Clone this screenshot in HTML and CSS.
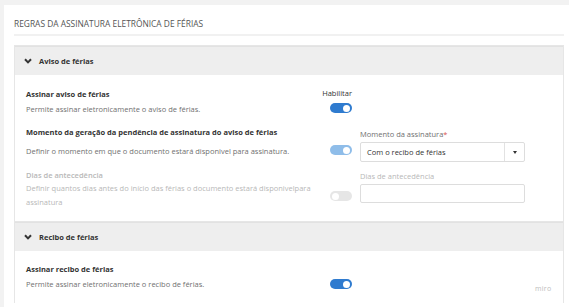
FILE: index.html
```html
<!DOCTYPE html>
<html lang="pt-BR">
  <head>
    <meta charset="UTF-8" />
    <meta name="viewport" content="width=device-width, initial-scale=1.0" />
    <title>Regras da assinatura eletrônica de férias</title>
    <link rel="stylesheet" href="styles.css">
  </head>
  <body>
    <div class="card">
      <h1 class="card-title">REGRAS DA ASSINATURA ELETRÔNICA DE FÉRIAS</h1>

      <!-- Aviso de férias -->
      <section class="panel">
        <div class="panel-header">
          <svg class="chevron" viewBox="0 0 8 6" width="8" height="6">
            <path d="M1 1.2 L4 4.4 L7 1.2" />
          </svg>
          Aviso de férias
        </div>
        <div class="panel-body">
          <div class="rule rule-first">
            <div class="rule-text">
              <div class="rule-title">Assinar aviso de férias</div>
              <div class="rule-desc desc-first">Permite assinar eletronicamente o aviso de férias.</div>
            </div>
            <div class="toggle-cell">
              <span class="toggle-label">Habilitar</span>
              <span class="toggle on"></span>
            </div>
            <div></div>
          </div>

          <div class="rule rule-moment">
            <div class="rule-text">
              <div class="rule-title">Momento da geração da pendência de assinatura do aviso de férias</div>
              <div class="rule-desc desc-moment">Definir o momento em que o documento estará disponivel para assinatura.</div>
            </div>
            <div class="toggle-cell toggle-moment">
              <span class="toggle on disabled"></span>
            </div>
            <div class="field">
              <label class="field-label">Momento da assinatura<span class="required">*</span></label>
              <div class="select">
                <span>Com o recibo de férias</span>
                <span class="select-arrow"></span>
              </div>
            </div>
          </div>

          <div class="rule rule-days muted">
            <div class="rule-text">
              <div class="rule-title">Dias de antecedência</div>
              <div class="rule-desc desc-days">Definir quantos dias antes do início das férias o documento estará disponivelpara assinatura</div>
            </div>
            <div class="toggle-cell toggle-days">
              <span class="toggle"></span>
            </div>
            <div class="field">
              <label class="field-label">Dias de antecedência</label>
              <input class="text-field" type="text" />
            </div>
          </div>
        </div>
      </section>

      <!-- Recibo de férias -->
      <section class="panel">
        <div class="panel-header">
          <svg class="chevron" viewBox="0 0 8 6" width="8" height="6">
            <path d="M1 1.2 L4 4.4 L7 1.2" />
          </svg>
          Recibo de férias
        </div>
        <div class="panel-body">
          <div class="rule rule-receipt">
            <div class="rule-text">
              <div class="rule-title">Assinar recibo de férias</div>
              <div class="rule-desc desc-first">Permite assinar eletronicamente o recibo de férias.</div>
            </div>
            <div class="toggle-cell toggle-receipt">
              <span class="toggle on"></span>
            </div>
            <div></div>
          </div>
        </div>
      </section>
    </div>

    <span class="watermark">miro</span>
  </body>
</html>
```

FILE: styles.css
```css
/* Base */
:root {
  --blue: #2f7bcf;
  --blue-light: #8fbde9;
  --text-dark: #333333;
  --text-mid: #707070;
  --text-muted: #b8b8b8;
  --line: #e6e6e6;
}

html,
body {
  height: 100%;
}

body {
  margin: 0;
  overflow: hidden;
  background: #f2f2f2;
  font-family: "Open Sans", "Noto Sans", sans-serif;
  font-size: 7.5px;
  color: var(--text-dark);
}

/* Card */
.card {
  margin: 5px 0 0 4px;
  padding: 0 5px 0 10px;
  background: #ffffff;
  min-height: 400px;
}

.card-title {
  margin: 0;
  padding: 13px 0 4px;
  font-size: 8.4px;
  line-height: 12px;
  font-weight: 400;
  color: #555555;
  border-bottom: 2px solid #f1f1f1;
}

/* Panels */
.panel {
  border: 1px solid var(--line);
  border-bottom: none;
}

.card-title + .panel {
  margin-top: 9px;
}

.panel-header {
  display: flex;
  align-items: center;
  gap: 7px;
  height: 28px;
  padding-left: 9px;
  background: #eeeeee;
  border-top: 1px solid #e2e2e2;
  font-weight: 700;
  color: #333333;
}

.chevron path {
  fill: none;
  stroke: #333333;
  stroke-width: 2;
}

.panel-body {
  padding: 12px 38px 12px 11px;
}

/* Rule rows */
.rule {
  display: grid;
  grid-template-columns: 1fr 22px 165px;
  column-gap: 8px;
  align-items: start;
  line-height: 14px;
}

.rule-title {
  font-weight: 700;
  color: var(--text-dark);
}

.rule-desc {
  color: var(--text-mid);
}

.desc-first {
  margin-top: 1px;
}

.rule-moment {
  margin-top: 9px;
}

.desc-moment {
  margin-top: 5px;
}

.rule-days {
  margin-top: 6px;
}

.desc-days {
  margin-top: -1px;
  padding-right: 10px;
}

.muted .rule-title,
.muted .rule-desc,
.muted .field-label {
  color: var(--text-muted);
}

.muted .rule-title {
  font-weight: 600;
}

/* Toggles */
.toggle-cell {
  display: flex;
  flex-direction: column;
  align-items: flex-end;
}

.toggle-label {
  margin-top: -1px;
  white-space: nowrap;
  color: var(--text-dark);
}

.toggle-label + .toggle {
  margin-top: 3px;
}

.toggle-moment {
  padding-top: 20px;
}

.toggle-days {
  padding-top: 23px;
}

.toggle-receipt {
  padding-top: 17px;
}

.toggle {
  position: relative;
  display: block;
  width: 22px;
  height: 10px;
  border-radius: 5px;
  background: #e6e6e6;
}

.toggle::after {
  content: "";
  position: absolute;
  top: 1.5px;
  left: 2px;
  width: 7px;
  height: 7px;
  border-radius: 50%;
  background: #ffffff;
}

.toggle.on {
  background: var(--blue);
}

.toggle.on::after {
  left: auto;
  right: 2px;
}

.toggle.on.disabled {
  background: var(--blue-light);
}

/* Fields */
.field {
  display: flex;
  flex-direction: column;
}

.field-label {
  margin-top: 2px;
  line-height: 14px;
  color: var(--text-mid);
}

.required {
  color: #d9534f;
}

.select {
  display: flex;
  align-items: center;
  justify-content: space-between;
  height: 18px;
  margin-top: 1px;
  padding-left: 6px;
  border: 1px solid #dddddd;
  border-radius: 2px;
  color: var(--text-dark);
}

.select-arrow {
  position: relative;
  width: 19px;
  height: 100%;
  border-left: 1px solid #e2e2e2;
}

.select-arrow::after {
  content: "";
  position: absolute;
  top: 8px;
  left: 8px;
  border-left: 2.5px solid transparent;
  border-right: 2.5px solid transparent;
  border-top: 3px solid #333333;
}

.text-field {
  box-sizing: border-box;
  height: 19px;
  margin: 1px 0 0;
  padding: 0 6px;
  border: 1px solid #dddddd;
  border-radius: 2px;
  font: inherit;
}

.rule-days .field-label {
  margin-top: 1px;
}

.rule-receipt {
  margin-top: 0;
}

.panel + .panel .panel-body {
  padding-top: 11px;
}

/* Watermark */
.watermark {
  position: absolute;
  left: 535px;
  top: 284px;
  font-size: 7px;
  letter-spacing: 0.3px;
  color: #bdbdbd;
}
```
